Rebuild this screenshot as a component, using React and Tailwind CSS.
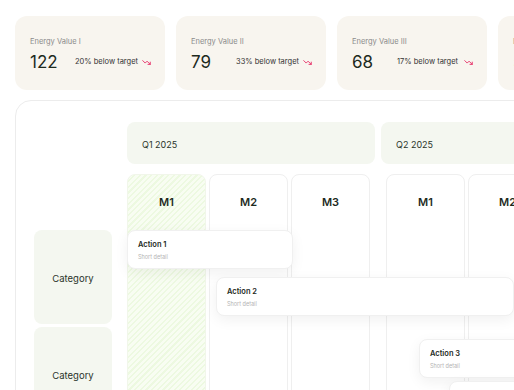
import React from "react";
import { TrendingDown } from "lucide-react";

const kpis = [
  { label: "Energy Value I", value: "122", note: "20% below target" },
  { label: "Energy Value II", value: "79", note: "33% below target" },
  { label: "Energy Value III", value: "68", note: "17% below target" },
  { label: "Energy Value IV", value: "54", note: "12% below target" },
];

const quarters = [
  { name: "Q1 2025", months: ["M1", "M2", "M3"] },
  { name: "Q2 2025", months: ["M1", "M2", "M3"] },
];

const actions = [
  { title: "Action 1", left: 0, top: 108, width: 166 },
  { title: "Action 2", left: 89, top: 155, width: 298 },
  { title: "Action 3", left: 292, top: 217, width: 160 },
  { title: "Action 4", left: 322, top: 259, width: 160 },
];

export default function App() {
  return (
    <div
      className="w-[514px] h-[390px] overflow-hidden bg-white text-[#1d2a1d]"
      style={{ fontFamily: "Inter, 'Noto Sans', sans-serif" }}
    >
      {/* kpi cards */}
      <div className="flex gap-[11px] pl-[15px] pt-[16px]">
        {kpis.map((k) => (
          <div
            key={k.label}
            className="w-[150px] h-[74px] shrink-0 rounded-[12px] bg-[#f8f5ef] pl-[15px] pr-[14px] pt-[21px]"
          >
            <div className="text-[7.5px] leading-[10px] text-[#8b8b8b]">{k.label}</div>
            <div className="mt-[5px] flex items-center">
              <span className="text-[17px] leading-[20px] w-[45px]">{k.value}</span>
              <span className="text-[7.5px] text-[#333]">{k.note}</span>
              <TrendingDown size={9} strokeWidth={2.5} className="ml-auto text-[#e8336b]" />
            </div>
          </div>
        ))}
      </div>

      {/* planner panel */}
      <div className="ml-[15px] mt-[10px] w-[620px] h-[420px] rounded-[16px] border border-[#ececec] pl-[18px] pt-[21px] flex gap-[15px]">
        <div className="w-[78px] shrink-0 pt-[108px] flex flex-col gap-[3px]">
          {["Category", "Category"].map((c, i) => (
            <div
              key={i}
              className="h-[94px] rounded-[8px] bg-[#f4f7f0] pt-[4px] flex items-center justify-center text-[9.5px] text-[#2a342a]"
            >
              {c}
            </div>
          ))}
        </div>

        <div className="relative flex-1">
          <div className="flex gap-[6px]">
            {quarters.map((q) => (
              <div
                key={q.name}
                className="w-[248px] h-[42px] shrink-0 rounded-[8px] bg-[#f4f7f0] pl-[15px] pt-[3px] flex items-center text-[9px] text-[#2a342a]"
              >
                {q.name}
              </div>
            ))}
          </div>
          <div className="mt-[10px] flex gap-[16px]">
            {quarters.map((q, qi) => (
              <div key={q.name} className="flex gap-[3px] shrink-0">
                {q.months.map((m, mi) => (
                  <div
                    key={m}
                    className={
                      qi === 0 && mi === 0
                        ? "w-[79px] h-[320px] rounded-[8px] border border-[#f1f6ea] bg-[repeating-linear-gradient(135deg,#edf9e1_0px,#edf9e1_1.5px,#f8fdf2_1.5px,#f8fdf2_4px)]"
                        : "w-[79px] h-[320px] rounded-[8px] border border-[#efefef] bg-white"
                    }
                  >
                    <div className="h-[54px] flex items-center justify-center text-[11px] font-semibold">
                      {m}
                    </div>
                  </div>
                ))}
              </div>
            ))}
          </div>

          {actions.map((a) => (
            <div
              key={a.title}
              className="absolute h-[39px] rounded-[8px] bg-white border border-[#f0f0f0] shadow-[0_4px_14px_rgba(0,0,0,0.06)] pl-[10px] pt-[9px]"
              style={{ left: a.left, top: a.top, width: a.width }}
            >
              <div className="text-[7.5px] leading-[10px] font-semibold">{a.title}</div>
              <div className="mt-[3px] text-[5.5px] leading-[8px] text-[#b3b3b3]">Short detail</div>
            </div>
          ))}
        </div>
      </div>
    </div>
  );
}
